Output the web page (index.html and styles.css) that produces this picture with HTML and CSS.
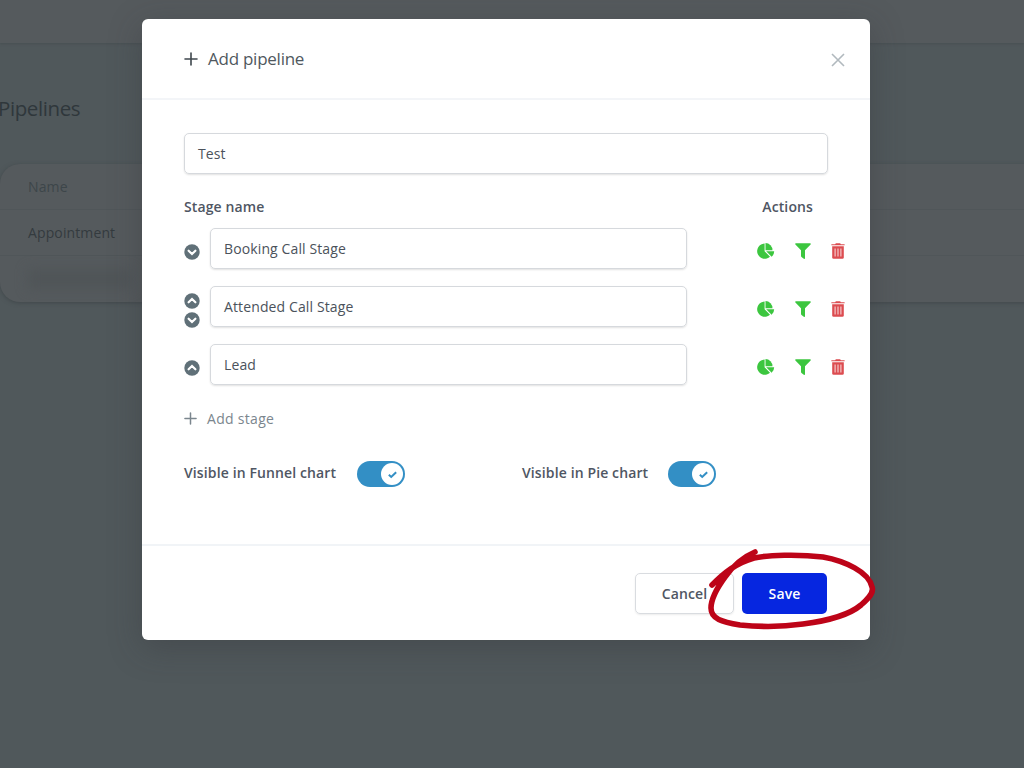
FILE: index.html
```html
<!DOCTYPE html>
<html lang="en">
  <head>
    <meta charset="UTF-8" />
    <meta name="viewport" content="width=device-width, initial-scale=1.0" />
    <title>Pipelines</title>
    <link rel="stylesheet" href="styles.css">
  </head>
  <body>
    <!-- Icons -->
    <svg class="sprite">
      <symbol id="plus" viewBox="0 0 14 14">
        <path d="M7 1v12M1 7h12" fill="none" stroke="currentColor" stroke-width="1.6" stroke-linecap="round" />
      </symbol>
      <symbol id="down" viewBox="0 0 16 16">
        <circle cx="8" cy="8" r="7.7" fill="currentColor" />
        <path d="M4.6 6.7L8 10l3.4-3.3" fill="none" stroke="#fff" stroke-width="2.2" stroke-linecap="round" />
      </symbol>
      <symbol id="up" viewBox="0 0 16 16">
        <circle cx="8" cy="8" r="7.7" fill="currentColor" />
        <path d="M4.6 9.3L8 6l3.4 3.3" fill="none" stroke="#fff" stroke-width="2.2" stroke-linecap="round" />
      </symbol>
      <symbol id="pie" viewBox="0 0 18 16">
        <path d="M7.600.6v7.600l5.400 5.500A7.600 7.600 0 1 1 7.600.6z" />
        <path d="M8.500.1a7.200 7.200 0 0 1 7 7.200H8.500z" />
        <path d="M9.200 8.300h8a7 7 0 0 1-2.600 5.400z" />
      </symbol>
      <symbol id="filter" viewBox="0 0 16 16">
        <path d="M.8.2h14.400c.6 0 .8.8.4 1.200L10 7.200v8c0 .7-.7.9-1.200.5l-2.300-1.800c-.3-.2-.5-.5-.5-.9V7.200L.4 1.400C0 1 .2.2.8.2z" />
      </symbol>
      <symbol id="trash" viewBox="0 0 14 16">
        <path d="M4.800.3h4.400l.6.900h3.500c.6 0 .6 1.100 0 1.100H.7c-.6 0-.6-1.100 0-1.100h3.500z" />
        <path d="M1.200 3.300h11.600v11.300c0 .8-.5 1.200-1.200 1.200H2.400c-.7 0-1.200-.4-1.200-1.200z" />
        <path d="M4.100 5.500v8M7 5.500v8M9.900 5.500v8" stroke="#fff" stroke-opacity=".75" stroke-width="1.100" />
      </symbol>
      <symbol id="check" viewBox="0 0 12 12">
        <path d="M2 6.300l2.600 2.400L10 3.500" fill="none" stroke="currentColor" stroke-width="2.200" />
      </symbol>
    </svg>

    <div class="page">
      <div class="topbar"></div>
      <h1>Pipelines</h1>
      <div class="table">
        <div class="table-row table-head">Name</div>
        <div class="table-row">Appointment</div>
        <div class="table-row"><span class="blurred"></span></div>
      </div>
    </div>

    <div class="overlay">
      <div class="modal">
        <div class="modal-header">
          <svg class="icon-plus"><use href="#plus" /></svg>
          <h2>Add pipeline</h2>
          <svg class="close" viewBox="0 0 14 14"><path d="M1 1l12 12M13 1L1 13" /></svg>
        </div>

        <div class="modal-body">
          <div class="input">Test</div>

          <div class="labels">
            <span class="label">Stage name</span>
            <span class="label label-actions">Actions</span>
          </div>

          <div class="stages">
            <div class="stage">
              <div class="arrows"><svg><use href="#down" /></svg></div>
              <div class="input">Booking Call Stage</div>
              <div class="actions">
                <svg class="pie"><use href="#pie" /></svg>
                <svg class="filter"><use href="#filter" /></svg>
                <svg class="trash"><use href="#trash" /></svg>
              </div>
            </div>
            <div class="stage">
              <div class="arrows"><svg><use href="#up" /></svg><svg><use href="#down" /></svg></div>
              <div class="input">Attended Call Stage</div>
              <div class="actions">
                <svg class="pie"><use href="#pie" /></svg>
                <svg class="filter"><use href="#filter" /></svg>
                <svg class="trash"><use href="#trash" /></svg>
              </div>
            </div>
            <div class="stage">
              <div class="arrows"><svg><use href="#up" /></svg></div>
              <div class="input">Lead</div>
              <div class="actions">
                <svg class="pie"><use href="#pie" /></svg>
                <svg class="filter"><use href="#filter" /></svg>
                <svg class="trash"><use href="#trash" /></svg>
              </div>
            </div>
          </div>

          <div class="add-stage">
            <svg><use href="#plus" /></svg>
            <span>Add stage</span>
          </div>

          <div class="switches">
            <div class="switch-group funnel">
              <span class="label">Visible in Funnel chart</span>
              <div class="switch"><div class="knob"><svg><use href="#check" /></svg></div></div>
            </div>
            <div class="switch-group pie-group">
              <span class="label">Visible in Pie chart</span>
              <div class="switch"><div class="knob"><svg><use href="#check" /></svg></div></div>
            </div>
          </div>
        </div>

        <div class="modal-footer">
          <div class="btn cancel">Cancel</div>
          <div class="btn save">Save</div>
        </div>

        <svg class="marker" viewBox="700 540 184 96">
          <path d="M755 552C743 557 733 566 725 577C717 588 711 600 711 608C711 619 722 622 740 625C760 627 782 627 803 624C826 621 848 616 861 605C870 597 874 592 872 587C869 572 845 561 823 557C798 554 768 555 754 558C736 563 724 573 712 585" />
        </svg>
      </div>
    </div>
  </body>
</html>
```

FILE: styles.css
```css
* {
  box-sizing: border-box;
}

body {
  margin: 0;
  height: 768px;
  overflow: hidden;
  font-family: "Open Sans", "Noto Sans", sans-serif;
  font-size: 14px;
  letter-spacing: 0.12px;
  background-color: #50585b;
}

h1,
h2 {
  margin: 0;
  font-weight: 400;
}

svg {
  display: block;
  flex: none;
  fill: currentColor;
}

.sprite {
  display: none;
}

/* Page behind the dialog */
.page {
  height: 768px;
}

.topbar {
  height: 43px;
  background-color: #555a5d;
  box-shadow: 0 1px 2px #484f52;
}

.page h1 {
  margin: 48px 0 39px -2px;
  font-size: 20.5px;
  line-height: 34px;
  letter-spacing: -0.4px;
  color: #2f373b;
}

.table {
  height: 138px;
  width: 1060px;
  border-radius: 20px;
  background-color: #555a5d;
  box-shadow: 0 1px 4px #41484b;
}

.table-row {
  display: flex;
  align-items: center;
  height: 46px;
  padding-left: 28px;
  border-bottom: 1px solid #505659;
  color: #343b3f;
}

.table-head {
  color: #3d464a;
}

.table-row:last-child {
  border-bottom: none;
}

.blurred {
  width: 104px;
  height: 20px;
  background-color: #505558;
  filter: blur(6px);
}

/* Dialog */
.overlay {
  position: absolute;
  inset: 0;
  padding: 19px 0 0 142px;
}

.modal {
  position: relative;
  width: 728px;
  height: 621px;
  border-radius: 6px;
  background-color: #fff;
  box-shadow: 0 8px 32px rgba(50, 50, 55, 0.35);
}

.modal-header {
  display: flex;
  align-items: center;
  height: 81px;
  padding: 0 25px 0 42px;
  border-bottom: 2px solid #f3f5f8;
}

.icon-plus {
  width: 14px;
  height: 14px;
  margin-right: 10px;
  color: #3f474d;
}

.modal-header h2 {
  font-size: 17px;
  letter-spacing: -0.25px;
  color: #50585e;
}

.close {
  width: 14px;
  height: 14px;
  margin: 2px 0 0 auto;
  fill: none;
  stroke: #b1b9be;
  stroke-width: 1.6;
}

.modal-body {
  height: 444px;
  padding: 33px 42px 0 42px;
}

.input {
  display: flex;
  align-items: center;
  height: 41px;
  padding: 0 13px 1px;
  border: 1px solid #d6d9dd;
  border-radius: 5px;
  box-shadow: 0 1px 2px rgba(0, 0, 0, 0.12);
  color: #4b525b;
}

.labels {
  display: flex;
  align-items: center;
  height: 54px;
  padding-top: 11px;
}

.label {
  font-weight: 600;
  color: #4f5663;
}

.label-actions {
  margin: 0 15px 0 auto;
}

.stages {
  display: flex;
  flex-direction: column;
  gap: 17px;
}

.stage {
  display: flex;
  align-items: center;
  height: 41px;
  width: 661px;
}

.arrows {
  display: flex;
  flex-direction: column;
  gap: 3px;
  width: 26px;
  padding-top: 7px;
  color: #607078;
}

.arrows svg {
  width: 16px;
  height: 16px;
}

.stage .input {
  width: 477px;
}

.actions {
  display: flex;
  align-items: center;
  gap: 20px;
  width: 88px;
  margin-left: auto;
  padding-top: 5px;
  color: #3cc63f;
}

.pie {
  width: 18px;
  height: 16px;
}

.filter {
  width: 16px;
  height: 16px;
}

.trash {
  width: 14px;
  height: 16px;
  color: #dc4c50;
}

.add-stage {
  display: flex;
  align-items: center;
  gap: 10px;
  height: 24px;
  margin-top: 21px;
  letter-spacing: 0.3px;
  color: #7b868e;
}

.add-stage svg {
  width: 13px;
  height: 13px;
}

.switches {
  display: flex;
  margin-top: 31px;
}

.switch-group {
  display: flex;
  align-items: center;
  justify-content: space-between;
}

.switch-group .label {
  margin-top: -4px;
}

.funnel {
  width: 221px;
}

.pie-group {
  width: 194px;
  margin-left: 117px;
}

.switch {
  display: flex;
  justify-content: flex-end;
  width: 48px;
  height: 26px;
  padding: 2px;
  border-radius: 13px;
  background-color: #338fc5;
}

.knob {
  display: flex;
  align-items: center;
  justify-content: center;
  width: 22px;
  height: 22px;
  border-radius: 50%;
  background-color: #fff;
  color: #338fc5;
}

.knob svg {
  width: 11px;
  height: 11px;
}

.modal-footer {
  display: flex;
  justify-content: flex-end;
  gap: 8px;
  height: 96px;
  padding: 27px 43px 0;
  border-top: 2px solid #f1f4f7;
}

.btn {
  display: flex;
  align-items: center;
  justify-content: center;
  height: 41px;
  padding-bottom: 1px;
  border-radius: 5px;
  font-weight: 600;
}

.cancel {
  width: 99px;
  border: 1px solid #d9dce0;
  box-shadow: 0 1px 2px rgba(0, 0, 0, 0.08);
  color: #4f5663;
}

.save {
  width: 85px;
  background-color: #0626e0;
  color: #fff;
}

/* Red circle around the save button */
.marker {
  position: absolute;
  left: 558px;
  top: 521px;
  width: 184px;
  height: 96px;
  fill: none;
  stroke: #bd0418;
  stroke-width: 5.6;
  stroke-linecap: round;
  stroke-linejoin: round;
}
```
